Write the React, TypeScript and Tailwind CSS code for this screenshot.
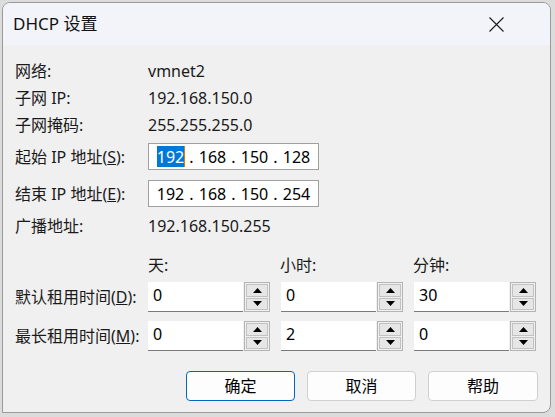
import React from 'react';

const font = "font-['Noto_Sans','Noto_Sans_CJK_SC',sans-serif]";

function Spin({value}: {value: string}) {
  return (
    <div className="flex h-[30px] w-[122px]">
      <div className="flex w-[96px] items-start border-b border-[#7a7a7a] bg-white pt-[3px] pl-[5px] text-[16px] leading-[20px] text-black">
        {value}
      </div>
      <div className="ml-px flex w-[26px] flex-col gap-px border border-[#b4b4b4] bg-[#f0f0f0] p-px">
        <div className="flex flex-1 items-center justify-center border border-[#c2c2c2] bg-[#e6e6e6]">
          <svg width="9" height="5" viewBox="0 0 9 5">
            <path d="M0 5 L4.5 0 L9 5 Z" fill="#000" />
          </svg>
        </div>
        <div className="flex flex-1 items-center justify-center border border-[#c2c2c2] bg-[#e6e6e6]">
          <svg width="9" height="5" viewBox="0 0 9 5">
            <path d="M0 0 L9 0 L4.5 5 Z" fill="#000" />
          </svg>
        </div>
      </div>
    </div>
  );
}

function IpField({parts, selected}: {parts: string[]; selected?: boolean}) {
  return (
    <div className="flex h-[27px] w-[171px] items-center border border-[#a0a0a0] bg-white pl-[8px] text-[16px] text-black">
      {parts.map((p, i) => (
        <React.Fragment key={i}>
          <span className="relative flex h-[21px] w-[27px] items-center justify-center">
            {i === 0 && selected ? (
              <>
                <span className="flex h-full w-full items-center justify-center bg-[#0078d7] text-white">{p}</span>
                <span className="absolute top-0 -right-px h-full w-px bg-[#e07b00]" />
              </>
            ) : (
              p
            )}
          </span>
          {i < parts.length - 1 && <span className="w-[15px] text-center">.</span>}
        </React.Fragment>
      ))}
    </div>
  );
}

function Row({label, children, className}: {label: React.ReactNode; children: React.ReactNode; className?: string}) {
  return (
    <div className={`flex items-center ${className ?? ''}`}>
      <div className="w-[133px] text-[16px] whitespace-nowrap text-[#1a1a1a]">{label}</div>
      {children}
    </div>
  );
}

export default function App() {
  return (
    <div className={`h-[417px] w-[555px] overflow-hidden bg-[#dcdcdc] pt-[2px] pl-[2px] ${font}`}>
      <div className="flex h-[411px] w-[549px] flex-col overflow-hidden rounded-t-[8px] rounded-br-[8px] border border-[#9a9a9a] bg-[#f0f0f0]">
        <div className="flex h-[42px] shrink-0 items-center justify-between bg-[#f3f4f9] pr-[46px] pl-[10px]">
          <span className="text-[17px] text-[#111]">DHCP 设置</span>
          <svg width="15" height="15" viewBox="0 0 15 15">
            <path d="M0.5 0.5 L14.5 14.5 M14.5 0.5 L0.5 14.5" stroke="#1a1a1a" strokeWidth="1.1" />
          </svg>
        </div>

        <div className="flex flex-col pt-[12px] pl-[12px] text-[16px] text-[#1a1a1a]">
          <Row label="网络:" className="h-[27px]">
            <span>vmnet2</span>
          </Row>
          <Row label="子网 IP:" className="h-[27px]">
            <span>192.168.150.0</span>
          </Row>
          <Row label="子网掩码:" className="h-[27px]">
            <span>255.255.255.0</span>
          </Row>
          <Row
            label={
              <>
                起始 IP 地址(<u>S</u>):
              </>
            }
            className="mt-[5px] h-[27px]"
          >
            <IpField parts={['192', '168', '150', '128']} selected />
          </Row>
          <Row
            label={
              <>
                结束 IP 地址(<u>E</u>):
              </>
            }
            className="mt-[10px] h-[27px]"
          >
            <IpField parts={['192', '168', '150', '254']} />
          </Row>
          <Row label="广播地址:" className="mt-[5px] h-[27px]">
            <span>192.168.150.255</span>
          </Row>

          <div className="mt-[14px] flex h-[24px] items-center pl-[133px]">
            <span className="w-[132px]">天:</span>
            <span className="w-[133px]">小时:</span>
            <span>分钟:</span>
          </div>
          <Row
            label={
              <>
                默认租用时间(<u>D</u>):
              </>
            }
            className="mt-[5px]"
          >
            <div className="flex gap-[11px]">
              <Spin value="0" />
              <Spin value="0" />
              <Spin value="30" />
            </div>
          </Row>
          <Row
            label={
              <>
                最长租用时间(<u>M</u>):
              </>
            }
            className="mt-[9px]"
          >
            <div className="flex gap-[11px]">
              <Spin value="0" />
              <Spin value="2" />
              <Spin value="0" />
            </div>
          </Row>

          <div className="mt-[20px] flex gap-[12px] pl-[171px]">
            <button className="h-[30px] w-[109px] rounded-[4px] border border-[#0067c0] bg-[#fdfdfd] text-[16px] text-black">
              确定
            </button>
            <button className="h-[30px] w-[109px] rounded-[4px] border border-[#d0d0d0] bg-[#fdfdfd] text-[16px] text-black">
              取消
            </button>
            <button className="h-[30px] w-[110px] rounded-[4px] border border-[#d0d0d0] bg-[#fdfdfd] text-[16px] text-black">
              帮助
            </button>
          </div>
        </div>
      </div>
    </div>
  );
}
